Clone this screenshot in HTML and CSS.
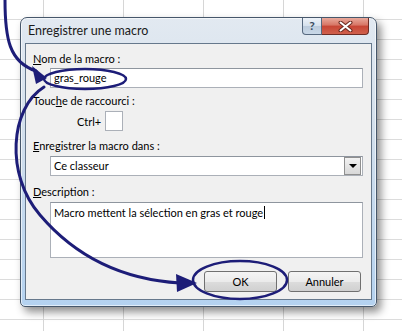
FILE: index.html
```html
<!DOCTYPE html>
<html lang="fr">
<head>
  <meta charset="UTF-8">
  <title>Enregistrer une macro</title>
  <link rel="stylesheet" href="styles.css">
</head>
<body>
  <div class="dialog">
    <div class="titlebar">
      <span class="title">Enregistrer une macro</span>
      <div class="caption">
        <span class="btn-help">?</span>
        <span class="btn-close">
          <svg width="15" height="11" viewBox="0 0 15 11">
            <path d="M2.5 1.5 L12.5 9.5 M12.5 1.5 L2.5 9.5" stroke="#6a2a20" stroke-width="4" stroke-linecap="round"/>
            <path d="M2.5 1.5 L12.5 9.5 M12.5 1.5 L2.5 9.5" stroke="#fff" stroke-width="2" stroke-linecap="round"/>
          </svg>
        </span>
      </div>
    </div>

    <div class="panel">
      <div class="label"><u>N</u>om de la macro :</div>
      <div class="field">gras_rouge</div>

      <div class="label lbl-touche">Touc<u>h</u>e de raccourci :</div>
      <div class="ctrl-row">
        <span>Ctrl+</span>
        <span class="key-box"></span>
      </div>

      <div class="label lbl-store"><u>E</u>nregistrer la macro dans :</div>
      <div class="field select">
        <span>Ce classeur</span>
        <span class="drop-btn"><span class="tri"></span></span>
      </div>

      <div class="label lbl-desc"><u>D</u>escription :</div>
      <div class="field memo"><span class="caret">Macro mettent la sélection en gras et rouge</span></div>

      <div class="buttons">
        <button class="btn">OK</button>
        <button class="btn">Annuler</button>
      </div>
    </div>
  </div>

  <!-- annotations dessinées par-dessus la capture -->
  <svg class="notes" width="402" height="331" viewBox="0 0 402 331">
    <g fill="none" stroke="#1d1d78" stroke-width="3" stroke-linecap="round">
      <path d="M5 0 C5 38 9 62 36 71"/>
      <ellipse cx="85" cy="79" rx="41" ry="10" stroke-width="2.5"/>
      <path d="M44 87 C10 108 5 175 40 215 C80 262 130 280 180 283"/>
      <ellipse cx="240" cy="280" rx="47" ry="19" stroke-width="2.5"/>
    </g>
    <g fill="#1d1d78">
      <polygon points="32,66 47,78 36,84"/>
      <polygon points="176,274 197,283 177,292"/>
    </g>
  </svg>
</body>
</html>
```

FILE: styles.css
```css
* {
  box-sizing: border-box;
}
body {
  margin: 0;
  width: 402px;
  height: 331px;
  overflow: hidden;
  position: relative;
  font-family: Lato, "Liberation Sans", sans-serif;
  font-size: 11px;
  color: #000;
  background-color: #fff;
  background-image:
    linear-gradient(to right, #d6d6d6 1px, transparent 1px),
    linear-gradient(to bottom, #dcdcdc 1px, transparent 1px);
  background-size: 80px 20px;
  background-position: 43px 19px;
  padding-top: 17px;
}
.dialog {
  margin-left: 20px;
  width: 357px;
  height: 290px;
  border: 1px solid #46576b;
  border-radius: 7px 7px 5px 5px;
  background: linear-gradient(to bottom, #e2e9f1 0%, #d2dfec 40%, #b4d2f0 100%);
  box-shadow: inset 0 0 0 1px rgba(255, 255, 255, 0.6), 4px 5px 8px rgba(0, 0, 0, 0.45);
  padding: 0 4px 6px 4px;
}
.titlebar {
  height: 25px;
  display: flex;
  align-items: flex-start;
  padding-left: 3px;
}
.title {
  line-height: 25px;
  font-size: 12.5px;
  color: #1a1a1a;
}
.caption {
  margin-left: auto;
  margin-right: 3px;
  display: flex;
  height: 17px;
}
.btn-help {
  width: 20px;
  height: 17px;
  border: 1px solid #56687e;
  border-top: none;
  border-radius: 0 0 0 4px;
  background: linear-gradient(to bottom, #edf2f8 0%, #d5e0ec 50%, #bccbdc 51%, #c9d8e8 100%);
  color: #3b4b5e;
  font-weight: bold;
  font-size: 12px;
  line-height: 16px;
  text-align: center;
}
.btn-close {
  width: 47px;
  height: 17px;
  border: 1px solid #6e2c24;
  border-top: none;
  border-left: none;
  border-radius: 0 0 4px 0;
  background: linear-gradient(to bottom, #e9a99b 0%, #d77565 45%, #c74535 50%, #d0604c 100%);
  display: flex;
  align-items: center;
  justify-content: center;
}
.panel {
  height: 257px;
  border: 1px solid #66788c;
  background: #f0f0f0;
  padding: 7px 8px 0 7px;
}
.label {
  line-height: 16px;
  height: 16px;
}
.lbl-touche {
  margin-top: 5px;
}
.lbl-store {
  margin-top: 7px;
}
.lbl-desc {
  margin-top: 8px;
}
.field {
  margin: 1px 0 0 17px;
  height: 20px;
  background: #fff;
  border: 1px solid #abb0b8;
  border-top-color: #8e959e;
  padding-left: 3px;
  line-height: 18px;
}
.ctrl-row {
  margin: 2px 0 0 44px;
  display: flex;
  align-items: center;
  gap: 4px;
  height: 20px;
}
.key-box {
  width: 18px;
  height: 20px;
  background: #fff;
  border: 1px solid #abb0b8;
}
.select {
  margin-top: 2px;
  display: flex;
  align-items: center;
  padding-right: 1px;
}
.drop-btn {
  margin-left: auto;
  width: 17px;
  height: 18px;
  border: 1px solid #8f8f8f;
  background: linear-gradient(to bottom, #f2f2f2, #d8d8d8);
  display: flex;
  align-items: center;
  justify-content: center;
}
.tri {
  width: 0;
  height: 0;
  border-left: 4px solid transparent;
  border-right: 4px solid transparent;
  border-top: 4px solid #000;
}
.memo {
  margin-top: 2px;
  height: 56px;
  line-height: 17px;
  padding-top: 1px;
}
.caret {
  border-right: 1px solid #000;
  padding-right: 1px;
}
.buttons {
  margin-top: 13px;
  display: flex;
  justify-content: flex-end;
  gap: 11px;
  padding-right: 2px;
}
.btn {
  width: 73px;
  height: 21px;
  border: 1px solid #707070;
  border-radius: 3px;
  background: linear-gradient(to bottom, #f4f4f4 0%, #ebebeb 50%, #dcdcdc 51%, #d0d0d0 100%);
  font-family: inherit;
  font-size: 11px;
  color: #000;
  padding: 0;
}
.notes {
  position: absolute;
  top: 0;
  left: 0;
  pointer-events: none;
}
```
